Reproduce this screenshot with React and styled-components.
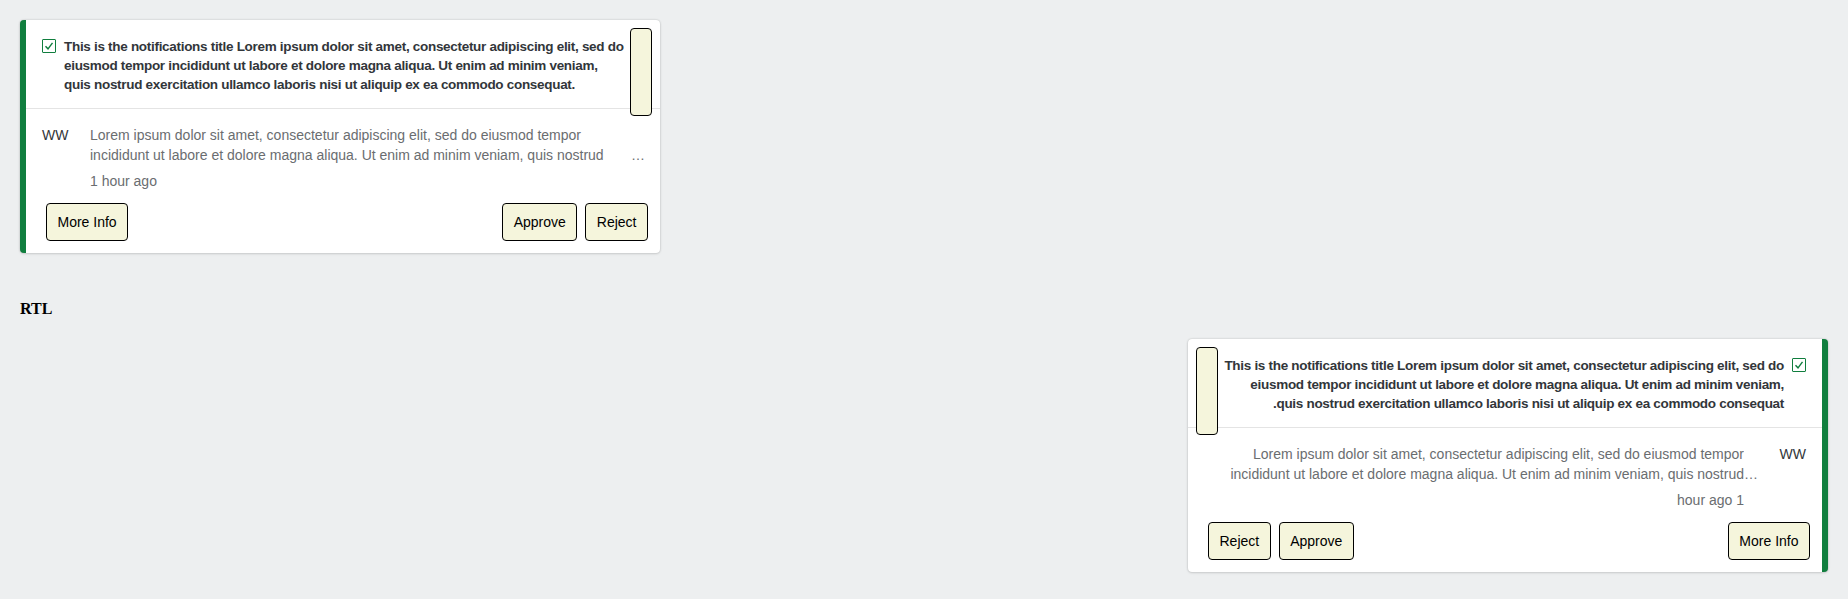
import React from "react";
import styled, { createGlobalStyle } from "styled-components";

const GlobalStyle = createGlobalStyle`
  body {
    margin: 0;
    background: #edeff0;
  }
`;

const Page = styled.div`
  padding: 20px;
`;

const Section = styled.div``;

const Heading = styled.h4`
  margin: 47px 0 21px;
  font-family: "Liberation Serif", "Times New Roman", serif;
  font-size: 16px;
  line-height: 18px;
  font-weight: bold;
  color: #000;
`;

const Card = styled.div`
  position: relative;
  width: 640px;
  box-sizing: border-box;
  background: #fff;
  border-radius: 4px;
  border-inline-start: 6px solid #107e3e;
  box-shadow: 0 0 2px rgba(0, 0, 0, 0.22), 0 1px 3px rgba(0, 0, 0, 0.1);
  font-family: "Liberation Sans", Arial, sans-serif;
  color: #32363a;
`;

const Header = styled.div`
  display: flex;
  align-items: flex-start;
  gap: 8px;
  padding-block: 17px 14px;
  padding-inline: 16px 30px;
  border-bottom: 1px solid #e4e4e4;
`;

const CheckBox = styled.span`
  flex: none;
  display: flex;
  align-items: center;
  justify-content: center;
  width: 14px;
  height: 14px;
  margin-top: 2px;
  box-sizing: border-box;
  border: 1px solid #107e3e;
  border-radius: 1px;
  background: #fff;
`;

const Title = styled.div`
  flex: 1;
  font-size: 13.5px;
  line-height: 19px;
  font-weight: bold;
  letter-spacing: -0.3px;
  color: #32363a;
`;

// keeps the reference's wrap points, while the text stays one bidi paragraph
const TitlePart = styled.span`
  white-space: nowrap;
`;

const CloseButton = styled.button`
  position: absolute;
  top: 8px;
  inset-inline-end: 8px;
  width: 22px;
  height: 88px;
  padding: 0;
  box-sizing: border-box;
  border: 1px solid #000;
  border-radius: 4px;
  background: #f5f5dc;
`;

const Body = styled.div`
  display: flex;
  gap: 22px;
  padding-block: 16px 0;
  padding-inline: 16px 15px;
`;

const Avatar = styled.div`
  flex: none;
  width: 26px;
  font-size: 14px;
  line-height: 20px;
  color: #32363a;
`;

const Content = styled.div`
  flex: 1;
  display: grid;
  grid-template-columns: 1fr 14px;
  direction: ltr;
`;

const Description = styled.div`
  direction: ${(p) => (p.$rtl ? "rtl" : "ltr")};
  max-height: 40px;
  overflow: hidden;
  font-size: 14px;
  line-height: 20px;
  color: #6a6d70;
`;

const Dots = styled.span`
  align-self: end;
  font-size: 14px;
  line-height: 20px;
  color: #6a6d70;
`;

const Time = styled.div`
  grid-column: 1;
  direction: ${(p) => (p.$rtl ? "rtl" : "ltr")};
  margin-top: 6px;
  font-size: 14px;
  line-height: 20px;
  color: #6a6d70;
`;

const Actions = styled.div`
  display: flex;
  justify-content: space-between;
  padding: 12px 12px 12px 20px;
`;

const Group = styled.div`
  display: flex;
  gap: 8px;
`;

const Button = styled.button`
  height: 38px;
  padding: 0 10.5px;
  box-sizing: border-box;
  border: 1px solid #000;
  border-radius: 4px;
  background: #f5f5dc;
  font-family: "Liberation Sans", Arial, sans-serif;
  font-size: 14px;
  color: #000;
`;

const Check = () => (
  <svg width="10" height="10" viewBox="0 0 10 10">
    <path d="M1.5 5.2 L4 7.8 L8.5 1.8" fill="none" stroke="#107e3e" strokeWidth="1.4" />
  </svg>
);

const titleParts = [
  "This is the notifications title Lorem ipsum dolor sit amet, consectetur adipiscing elit, sed do",
  "eiusmod tempor incididunt ut labore et dolore magna aliqua. Ut enim ad minim veniam,",
  "quis nostrud exercitation ullamco laboris nisi ut aliquip ex ea commodo consequat.",
];

const text =
  "Lorem ipsum dolor sit amet, consectetur adipiscing elit, sed do eiusmod tempor incididunt ut labore et dolore magna aliqua. Ut enim ad minim veniam, quis nostrud exercitation ullamco laboris nisi ut aliquip ex ea commodo consequat.";

const Notification = ({ rtl }) => (
  <Card>
    <Header>
      <CheckBox>
        <Check />
      </CheckBox>
      <Title>
        {titleParts.map((part, i) => (
          <React.Fragment key={i}>
            {i > 0 && " "}
            <TitlePart>{part}</TitlePart>
          </React.Fragment>
        ))}
      </Title>
    </Header>
    <CloseButton />
    <Body>
      <Avatar>WW</Avatar>
      <Content>
        <Description $rtl={rtl}>{text}</Description>
        <Dots>…</Dots>
        <Time $rtl={rtl}>1 hour ago</Time>
      </Content>
    </Body>
    <Actions>
      <Group>
        <Button>More Info</Button>
      </Group>
      <Group>
        <Button>Approve</Button>
        <Button>Reject</Button>
      </Group>
    </Actions>
  </Card>
);

export default function App() {
  return (
    <>
      <GlobalStyle />
      <Page>
        <Section>
          <Notification />
        </Section>
        <Heading>RTL</Heading>
        <Section dir="rtl">
          <Notification rtl />
        </Section>
      </Page>
    </>
  );
}
